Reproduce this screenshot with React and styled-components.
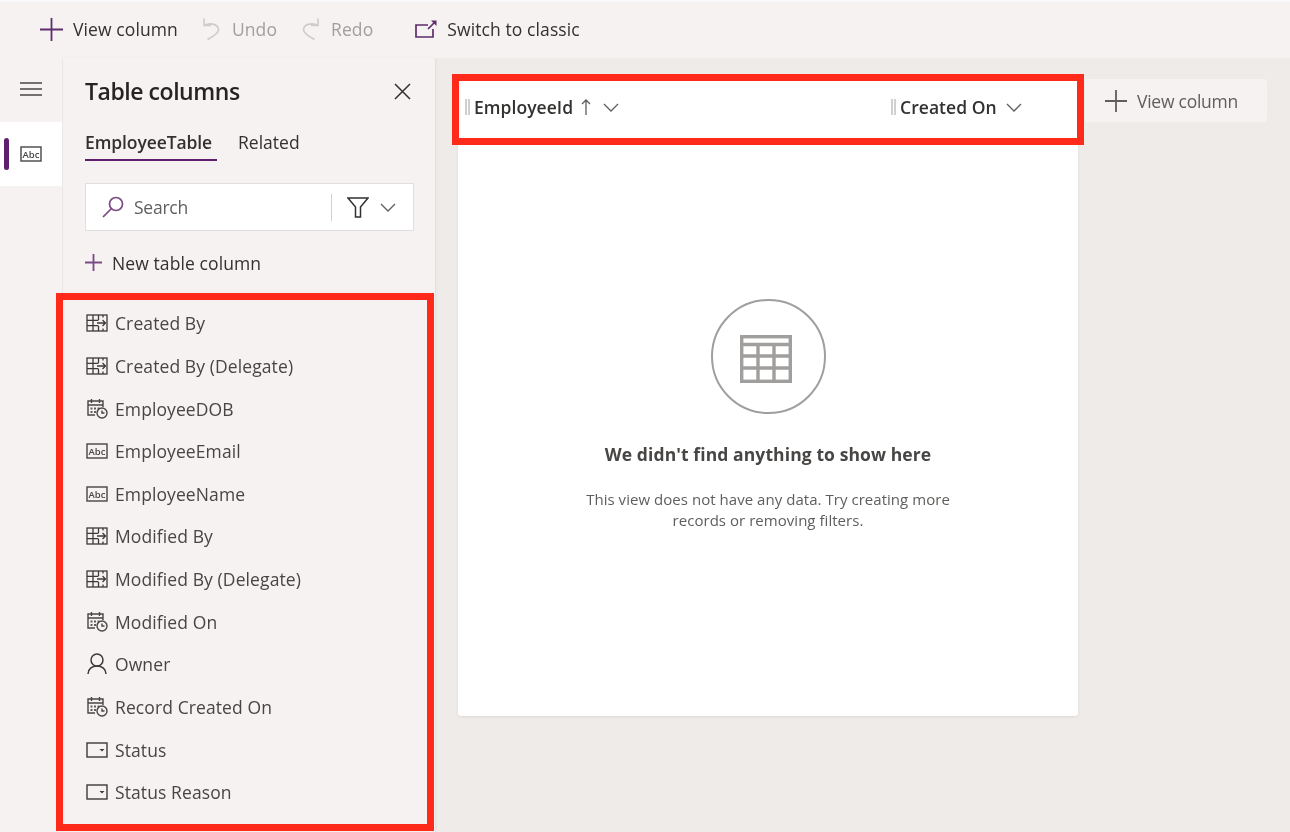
import React from 'react'
import styled, { createGlobalStyle } from 'styled-components'

const GlobalStyle = createGlobalStyle`
  html, body {
    margin: 0;
    padding: 0;
    background: #eeebe9;
  }
  * {
    box-sizing: border-box;
  }
`

const Page = styled.div`
  position: relative;
  width: 1290px;
  height: 832px;
  overflow: hidden;
  display: flex;
  flex-direction: column;
  font-family: 'Open Sans', 'Noto Sans', sans-serif;
  font-size: 17.5px;
  letter-spacing: 0.1px;
  color: #323130;
  background: #eeebe9;
`

const Toolbar = styled.div`
  flex: 0 0 58px;
  display: flex;
  align-items: center;
  padding: 0 0 2px 40px;
  background: #f5f2f1;
  border-top: 2px solid #f9f9fb;
  filter: blur(0.35px);
`

const ToolItem = styled.div`
  display: flex;
  align-items: center;
  gap: ${p => p.$gap || 10}px;
  margin-left: ${p => p.$left || 0}px;
  color: ${p => (p.$disabled ? '#a19f9d' : '#323130')};
`

const Body = styled.div`
  flex: 1;
  display: flex;
  min-height: 0;
  filter: blur(0.35px);
`

const Rail = styled.div`
  flex: 0 0 63px;
  display: flex;
  flex-direction: column;
  background: #f5f2f1;
  border-right: 1px solid #ebe9e7;
`

const MenuButton = styled.div`
  height: 64px;
  display: flex;
  align-items: center;
  padding: 0 0 2px 20px;
`

const RailItem = styled.div`
  position: relative;
  height: 64px;
  display: flex;
  align-items: center;
  padding-left: 20px;
  background: #fff;

  &::before {
    content: '';
    position: absolute;
    left: 4px;
    top: 16px;
    width: 5px;
    height: 32px;
    border-radius: 3px;
    background: #5f1f6e;
  }
`

const Panel = styled.div`
  flex: 0 0 372px;
  display: flex;
  flex-direction: column;
  padding: 0 21px 0 22px;
  background: #f5f2f1;
  box-shadow: 1px 0 2px rgba(0, 0, 0, 0.06);
`

const PanelHeader = styled.div`
  height: 66px;
  display: flex;
  align-items: center;
  justify-content: space-between;
  padding-right: 3px;
`

const PanelTitle = styled.h2`
  margin: 0;
  font-size: 23px;
  font-weight: 600;
  letter-spacing: -0.45px;
  color: #252423;
`

const Tabs = styled.div`
  height: 40px;
  display: flex;
  gap: 21px;
`

const Tab = styled.div`
  height: 37px;
  padding-right: ${p => (p.$active ? 5 : 0)}px;
  display: flex;
  align-items: center;
  font-weight: ${p => (p.$active ? 600 : 400)};
  letter-spacing: ${p => (p.$active ? -0.1 : 0)}px;
  border-bottom: 2px solid ${p => (p.$active ? '#5f1f6e' : 'transparent')};
  color: #323130;
`

const SearchBox = styled.div`
  margin-top: 19px;
  height: 48px;
  display: flex;
  align-items: center;
  padding: 0 17px 0 16px;
  background: #fff;
  border: 1px solid #e1dfdd;
`

const SearchText = styled.span`
  flex: 1;
  margin-left: 10px;
  letter-spacing: -0.25px;
  color: #605e5c;
`

const FilterGroup = styled.div`
  display: flex;
  align-items: center;
  gap: 11px;
  height: 27px;
  padding-left: 15px;
  border-left: 1px solid #d2d0ce;
`

const NewColumn = styled.div`
  height: 63px;
  display: flex;
  align-items: center;
  gap: 10px;
`

const ColumnList = styled.div`
  display: flex;
  flex-direction: column;
  margin-top: 8px;
`

const ColumnRow = styled.div`
  height: 42.64px;
  display: flex;
  align-items: center;
  gap: 7px;
  color: #484644;
`

const Canvas = styled.div`
  flex: 1;
  display: flex;
  align-items: flex-start;
  gap: 7px;
  padding: 22px 0 0 23px;
`

const Card = styled.div`
  width: 620px;
  height: 636px;
  display: flex;
  flex-direction: column;
  background: #fff;
  border-radius: 3px;
  box-shadow: 0 1px 3px rgba(0, 0, 0, 0.08);
`

const HeaderRow = styled.div`
  height: 54px;
  display: flex;
  align-items: center;
  padding-left: 7px;
`

const HeaderCell = styled.div`
  width: ${p => p.$width}px;
  display: flex;
  align-items: center;
  font-weight: 600;
  letter-spacing: 0.05px;
  color: #323130;
`

const Grip = styled.span`
  width: 5px;
  height: 16px;
  margin-right: 4px;
  border-left: 2px solid #d2d0ce;
  border-right: 2px solid #d2d0ce;
`

const HeaderGap = styled.span`
  width: ${p => p.$width}px;
`

const EmptyState = styled.div`
  display: flex;
  flex-direction: column;
  align-items: center;
  padding-top: 165px;
`

const EmptyCircle = styled.div`
  width: 115px;
  height: 115px;
  display: flex;
  align-items: center;
  justify-content: center;
  padding: 4px 4px 0 0;
  border: 2.5px solid #a19f9d;
  border-radius: 50%;
`

const EmptyTitle = styled.h3`
  margin: 28px 0 0;
  font-size: 17.5px;
  line-height: 24px;
  font-weight: 700;
  color: #484644;
`

const EmptyText = styled.p`
  margin: 23px 0 0;
  width: 380px;
  font-size: 15px;
  line-height: 21px;
  letter-spacing: 0.04px;
  text-align: center;
  color: #605e5c;
`

const AddColumn = styled.div`
  width: 182px;
  height: 43px;
  margin-top: -1px;
  display: flex;
  align-items: center;
  gap: 10px;
  padding: 1px 0 0 20px;
  background: #f5f2f1;
  border-radius: 3px;
  letter-spacing: -0.25px;
  color: #605e5c;
`

const Highlight = styled.div`
  position: absolute;
  left: ${p => p.$left}px;
  top: ${p => p.$top}px;
  width: ${p => p.$width}px;
  height: ${p => p.$height}px;
  border: ${p => p.$border}px solid #ff2a1a;
  pointer-events: none;
`

const Icon = ({ w, h, children, fill = 'none', stroke = 'currentColor', sw = 1.3 }) => (
  <svg
    width={w}
    height={h}
    viewBox={`0 0 ${w} ${h}`}
    fill={fill}
    stroke={stroke}
    strokeWidth={sw}
    style={{ flex: 'none', display: 'block' }}
  >
    {children}
  </svg>
)

const PlusIcon = ({ size = 23, color = '#5f2c6e' }) => (
  <Icon w={size} h={size} stroke={color} sw={1.8}>
    <path d={`M${size / 2} 0V${size}M0 ${size / 2}H${size}`} />
  </Icon>
)

const UndoIcon = () => (
  <Icon w={18} h={22} stroke="#cfcdcb" sw={1.7}>
    <path d="M2 0.500v7h7M2 7.500C7 4.500 16 5.500 16.500 11.500 16.800 15 12 18 5.500 21.500" />
  </Icon>
)

const RedoIcon = () => (
  <Icon w={18} h={22} stroke="#cfcdcb" sw={1.7}>
    <path d="M16 0.500v7H9M16 7.500C11 4.500 2 5.500 1.500 11.500 1.200 15 6 18 12.500 21.500" />
  </Icon>
)

const SwitchIcon = () => (
  <Icon w={22} h={18} stroke="#5f2c6e" sw={1.7}>
    <path d="M13 5H1v12h17V9M13 9l7-7" />
    <path d="M16 0.500h5.500V6z" fill="#5f2c6e" stroke="none" />
  </Icon>
)

const MenuIcon = () => (
  <Icon w={22} h={14} stroke="#484644" sw={1.4}>
    <path d="M0 1h22M0 7h22M0 13h22" />
  </Icon>
)

const CloseIcon = () => (
  <Icon w={17} h={17} stroke="#323130" sw={1.5}>
    <path d="M1 1l15 15M16 1L1 16" />
  </Icon>
)

const SearchIcon = () => (
  <Icon w={22} h={22} stroke="#7a4a87" sw={1.7}>
    <circle cx="14" cy="8" r="6.500" />
    <path d="M9.500 12.500L1 21" />
  </Icon>
)

const FilterIcon = () => (
  <Icon w={22} h={21} stroke="#323130" sw={1.5}>
    <path d="M1 1h20l-7.500 9v10h-5V10z" />
  </Icon>
)

const Chevron = ({ color = '#605e5c', w = 16 }) => (
  <Icon w={w} h={9} stroke={color} sw={1.3}>
    <path d={`M1 1l${w / 2 - 1} 7 ${w / 2 - 1}-7`} />
  </Icon>
)

const SortArrow = () => (
  <Icon w={10} h={16} stroke="#605e5c" sw={1.3}>
    <path d="M5 16V1M1 5l4-4 4 4" />
  </Icon>
)

const AbcIcon = () => (
  <Icon w={22} h={16} stroke="#484644" sw={1.4}>
    <rect x="1" y="1" width="20" height="14" />
    <text x="11" y="11.500" textAnchor="middle" fontSize="9.500" fontWeight="600" fontFamily="'Open Sans', sans-serif" fill="#484644" stroke="none">
      Abc
    </text>
  </Icon>
)

const LookupIcon = () => (
  <Icon w={22} h={18} stroke="#3b3a39" sw={1.3}>
    <rect x="1" y="1" width="20" height="16" />
    <path d="M7 1v16M12.500 1v5M12.500 12v5M1 6.300h11.500M1 11.600h11.500M17 1v2.500M17 14.500V17M11 9h8.500M16.500 6L19.500 9l-3 3" />
  </Icon>
)

const DateIcon = () => (
  <Icon w={22} h={21} stroke="#484644" sw={1.4}>
    <path d="M9 17H2V3h15v6M2 7h15M5.500 1v4M13.500 1v4" />
    <path d="M4.500 9.500h2v2h-2zM8 9.500h2v2H8zM11.500 9.500h2v2h-2zM4.500 13h2v2h-2zM8 13h2v2H8z" fill="#605e5c" stroke="none" />
    <circle cx="16" cy="15" r="5" fill="#f5f2f1" />
    <path d="M16 12.500V15h2.500" />
  </Icon>
)

const OwnerIcon = () => (
  <Icon w={22} h={22} stroke="#3b3a39" sw={1.5}>
    <circle cx="11" cy="7" r="6" />
    <path d="M2 21c0-5 4-8 9-8s9 3 9 8" />
  </Icon>
)

const StatusIcon = () => (
  <Icon w={22} h={16} stroke="#3b3a39" sw={1.4}>
    <rect x="1" y="1" width="20" height="14" />
    <path d="M13.500 7h5l-2.500 2.500z" fill="#3b3a39" stroke="none" />
  </Icon>
)

const TableIcon = () => (
  <Icon w={52} h={48} stroke="#a19f9d" sw={3.4}>
    <rect x="1.700" y="1.700" width="48.600" height="44.600" />
    <path d="M1.700 9.500h48.600M1.700 21h48.600M1.700 33h48.600M18 9.500V46M34 9.500V46" />
  </Icon>
)

const icons = {
  lookup: LookupIcon,
  date: DateIcon,
  text: AbcIcon,
  owner: OwnerIcon,
  status: StatusIcon,
}

const columns = [
  ['lookup', 'Created By'],
  ['lookup', 'Created By (Delegate)'],
  ['date', 'EmployeeDOB'],
  ['text', 'EmployeeEmail'],
  ['text', 'EmployeeName'],
  ['lookup', 'Modified By'],
  ['lookup', 'Modified By (Delegate)'],
  ['date', 'Modified On'],
  ['owner', 'Owner'],
  ['date', 'Record Created On'],
  ['status', 'Status'],
  ['status', 'Status Reason'],
]

const IconSlot = styled.span`
  width: 23px;
  display: flex;
  justify-content: center;
`

const App = () => (
  <Page>
    <GlobalStyle />
    <Toolbar>
      <ToolItem>
        <PlusIcon />
        View column
      </ToolItem>
      <ToolItem $left={24} $gap={12} $disabled>
        <UndoIcon />
        Undo
      </ToolItem>
      <ToolItem $left={25} $gap={11} $disabled>
        <RedoIcon />
        Redo
      </ToolItem>
      <ToolItem $left={42}>
        <SwitchIcon />
        Switch to classic
      </ToolItem>
    </Toolbar>
    <Body>
      <Rail>
        <MenuButton>
          <MenuIcon />
        </MenuButton>
        <RailItem>
          <AbcIcon />
        </RailItem>
      </Rail>
      <Panel>
        <PanelHeader>
          <PanelTitle>Table columns</PanelTitle>
          <CloseIcon />
        </PanelHeader>
        <Tabs>
          <Tab $active>EmployeeTable</Tab>
          <Tab>Related</Tab>
        </Tabs>
        <SearchBox>
          <SearchIcon />
          <SearchText>Search</SearchText>
          <FilterGroup>
            <FilterIcon />
            <Chevron />
          </FilterGroup>
        </SearchBox>
        <NewColumn>
          <PlusIcon size={17} color="#7a4a87" />
          New table column
        </NewColumn>
        <ColumnList>
          {columns.map(([type, name]) => {
            const ColumnIcon = icons[type]
            return (
              <ColumnRow key={name}>
                <IconSlot>
                  <ColumnIcon />
                </IconSlot>
                {name}
              </ColumnRow>
            )
          })}
        </ColumnList>
      </Panel>
      <Canvas>
        <Card>
          <HeaderRow>
            <HeaderCell $width={426}>
              <Grip />
              EmployeeId
              <HeaderGap $width={8} />
              <SortArrow />
              <HeaderGap $width={12} />
              <Chevron />
            </HeaderCell>
            <HeaderCell $width={180}>
              <Grip />
              Created On
              <HeaderGap $width={9} />
              <Chevron />
            </HeaderCell>
          </HeaderRow>
          <EmptyState>
            <EmptyCircle>
              <TableIcon />
            </EmptyCircle>
            <EmptyTitle>We didn't find anything to show here</EmptyTitle>
            <EmptyText>
              This view does not have any data. Try creating more records or removing filters.
            </EmptyText>
          </EmptyState>
        </Card>
        <AddColumn>
          <PlusIcon size={22} color="#605e5c" />
          View column
        </AddColumn>
      </Canvas>
    </Body>
    <Highlight $left={452} $top={74} $width={632} $height={71} $border={7} />
    <Highlight $left={56} $top={293} $width={378} $height={538} $border={7} />
  </Page>
)

export default App
